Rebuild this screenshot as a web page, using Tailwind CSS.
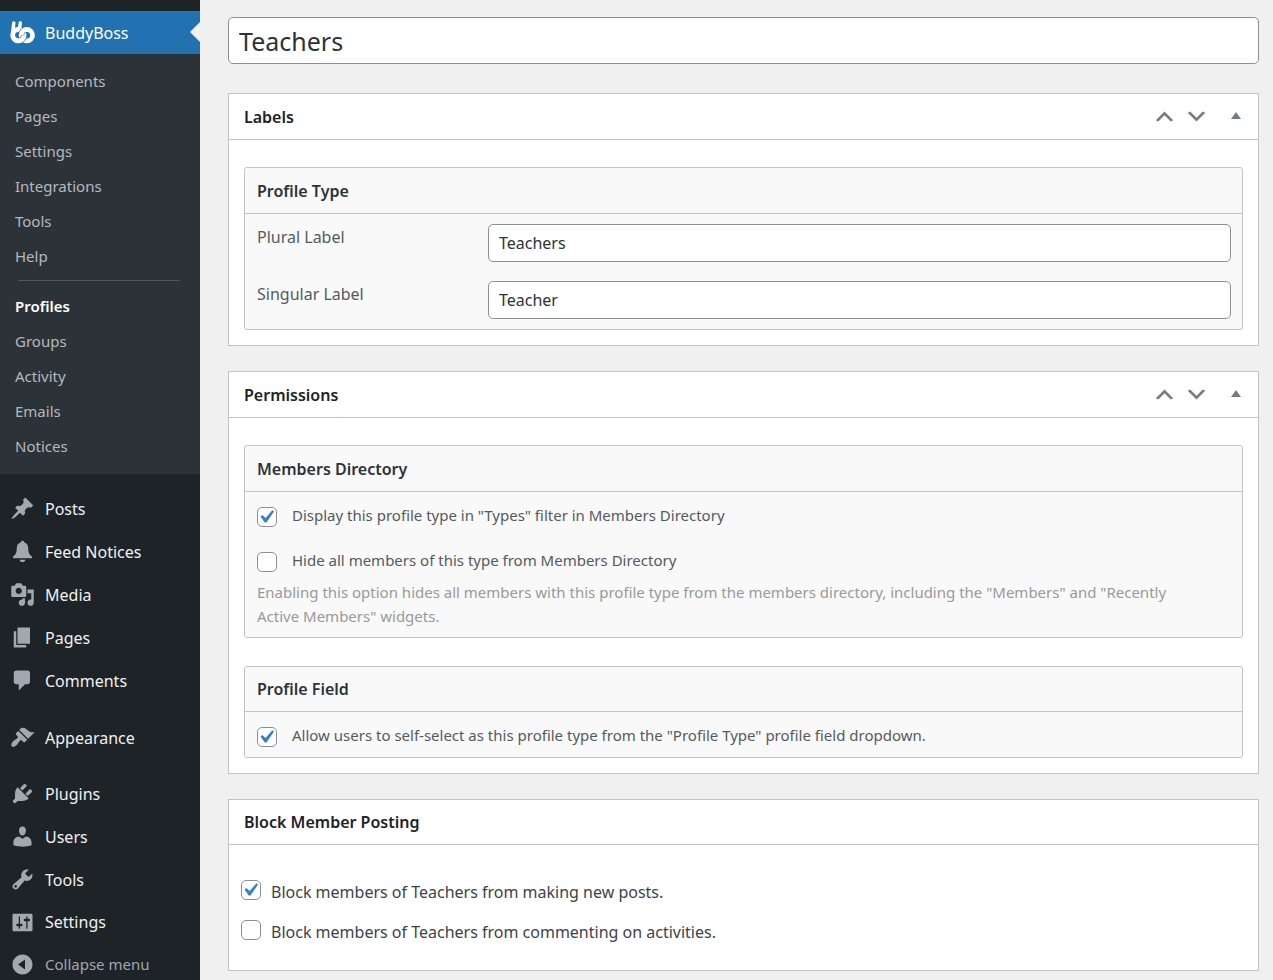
<!DOCTYPE html>
<html lang="en">
<head>
<meta charset="utf-8">
<meta name="viewport" content="width=device-width, initial-scale=1">
<title>Edit Profile Type</title>
<script src="https://cdn.jsdelivr.net/npm/@tailwindcss/browser@4"></script>
</head>
<body class="bg-[#f0f0f1] font-['Noto_Sans','Open_Sans',sans-serif] text-[#3c434a]">
<div class="flex min-h-screen">
  <nav aria-label="Admin menu" class="w-[200px] shrink-0 bg-[#1d2327] pt-[11px] text-base text-[#f0f0f1]">
    <a href="#" class="relative flex h-[43px] items-center gap-[10px] bg-[#2271b1] pl-[10px] text-white">
      <svg class="size-[25px]" viewBox="0 0 25 25" fill="none" aria-hidden="true">
        <path stroke="#fff" stroke-width="3.4" stroke-linecap="round" d="M3.800 3L2.600 13M10.300 3L9.500 8.500"/>
        <circle cx="8.400" cy="15.200" r="5.700" stroke="#fff" stroke-width="4.800"/>
        <circle cx="16.800" cy="15.200" r="5.700" stroke="#2271b1" stroke-width="6"/>
        <circle cx="16.800" cy="15.200" r="5.700" stroke="#fff" stroke-width="4.800"/>
        <path stroke="#2271b1" stroke-width="6" d="M14.100 15.200A5.700 5.700 0 0 1 8.400 20.900"/>
        <path stroke="#fff" stroke-width="4.800" d="M14.100 15.200A5.700 5.700 0 0 1 8.400 20.900A5.700 5.700 0 0 1 5 19.800"/>
      </svg>
      <span>BuddyBoss</span>
      <span class="absolute top-[11px] right-0 border-y-[10px] border-r-[10px] border-y-transparent border-r-[#f0f0f1]"></span>
    </a>
    <div class="bg-[#2c3338] py-[10px] text-[15px] text-[#b4b9be]">
      <a href="#" class="flex h-[35px] items-center px-[15px]">Components</a>
      <a href="#" class="flex h-[35px] items-center px-[15px]">Pages</a>
      <a href="#" class="flex h-[35px] items-center px-[15px]">Settings</a>
      <a href="#" class="flex h-[35px] items-center px-[15px]">Integrations</a>
      <a href="#" class="flex h-[35px] items-center px-[15px]">Tools</a>
      <a href="#" class="flex h-[35px] items-center px-[15px]">Help</a>
      <hr class="mt-[6px] mr-5 mb-2 ml-[18px] border-t border-[#50565b]">
      <a href="#" aria-current="page" class="flex h-[35px] items-center px-[15px] font-semibold text-white">Profiles</a>
      <a href="#" class="flex h-[35px] items-center px-[15px]">Groups</a>
      <a href="#" class="flex h-[35px] items-center px-[15px]">Activity</a>
      <a href="#" class="flex h-[35px] items-center px-[15px]">Emails</a>
      <a href="#" class="flex h-[35px] items-center px-[15px]">Notices</a>
    </div>
    <div class="pt-[13px]">
      <a href="#" class="flex h-[43px] items-center gap-[10px] pl-[10px]">
        <svg class="size-[25px] fill-[#a2a8ad]" viewBox="0 0 20 20" aria-hidden="true"><path d="M10.440 3.020l1.820-1.820 6.360 6.350-1.830 1.820c-1.050-.68-2.480-.57-3.410.36l-.75.75c-.92.93-1.040 2.350-.35 3.410l-1.830 1.820-2.410-2.410-2.800 2.790c-.42.42-3.380 2.710-3.800 2.290s1.860-3.390 2.280-3.810l2.790-2.790L4.100 9.360l1.830-1.820c1.050.69 2.480.57 3.400-.36l.75-.75c.93-.92 1.050-2.350.36-3.410z"/></svg>
        Posts</a>
      <a href="#" class="flex h-[43px] items-center gap-[10px] pl-[10px]">
        <svg class="size-[25px] fill-[#a2a8ad]" viewBox="0 0 20 20" aria-hidden="true"><path d="M10 1.400c.8 0 1.300.5 1.400 1.200 2.100.7 3.200 2.400 3.200 4.800 0 3.600.9 5.200 2.700 6.300.5.4.5 1.700-.1 1.700H2.800c-.6 0-.6-1.300-.1-1.700 1.800-1.100 2.700-2.700 2.700-6.300 0-2.400 1.100-4.100 3.200-4.800.1-.7.600-1.200 1.400-1.200zM7.700 16.500h4.600c-.2 1.200-1.100 1.900-2.300 1.900s-2.100-.7-2.300-1.900z"/></svg>
        Feed Notices</a>
      <a href="#" class="flex h-[43px] items-center gap-[10px] pl-[10px]">
        <svg class="size-[25px] fill-[#a2a8ad]" viewBox="0 0 20 20" aria-hidden="true"><path d="M13 11V4c0-.55-.45-1-1-1h-1.670L9 1H5L3.670 3H2c-.55 0-1 .45-1 1v7c0 .55.45 1 1 1h10c.55 0 1-.45 1-1zM7 4.500c1.380 0 2.500 1.120 2.500 2.500S8.380 9.500 7 9.500 4.500 8.380 4.500 7 5.620 4.500 7 4.500zM14 6h5v10.500c0 1.380-1.120 2.500-2.500 2.500S14 17.880 14 16.500s1.120-2.500 2.500-2.500c.17 0 .34.02.5.05V9h-3V6zm-4 8.050V13h2v3.500c0 1.380-1.120 2.500-2.500 2.500S7 17.880 7 16.500 8.120 14 9.500 14c.17 0 .34.02.5.05z"/></svg>
        Media</a>
      <a href="#" class="flex h-[43px] items-center gap-[10px] pl-[10px]">
        <svg class="size-[25px] fill-[#a2a8ad]" viewBox="0 0 20 20" aria-hidden="true"><path d="M6 15V2h10v13H6zm-1 1h8v2H3V5h2v11z"/></svg>
        Pages</a>
      <a href="#" class="flex h-[43px] items-center gap-[10px] pl-[10px]">
        <svg class="size-[25px] fill-[#a2a8ad]" viewBox="0 0 20 20" aria-hidden="true"><path d="M5 2h9c1.100 0 2 .9 2 2v7c0 1.100-.9 2-2 2h-2l-5 5v-5H5c-1.100 0-2-.9-2-2V4c0-1.100.9-2 2-2z"/></svg>
        Comments</a>
      <a href="#" class="mt-[14px] flex h-[43px] items-center gap-[10px] pl-[10px]">
        <svg class="size-[25px] fill-[#a2a8ad]" viewBox="0 0 20 20" aria-hidden="true"><path d="M14.480 11.060L7.410 3.990l1.500-1.500c.5-.56 2.300-.47 3.510.32 1.210.8 1.430 1.280 2.910 2.100 1.180.64 2.450 1.260 4.450.85zm-.71.71L6.700 4.700 4.930 6.470c-.39.39-.39 1.020 0 1.410l1.060 1.060c.39.39.39 1.030 0 1.420-.6.6-1.430 1.110-2.210 1.690-.35.26-.7.53-1.010.84C1.430 14.230.4 16.080 1.400 17.070c.99 1 2.840-.03 4.180-1.360.31-.31.58-.66.85-1.020.57-.78 1.080-1.610 1.690-2.210.39-.39 1.020-.39 1.410 0l1.060 1.060c.39.39 1.020.39 1.410 0z"/></svg>
        Appearance</a>
      <a href="#" class="mt-[13px] flex h-[43px] items-center gap-[10px] pl-[10px]">
        <svg class="size-[25px] fill-[#a2a8ad]" viewBox="0 0 20 20" aria-hidden="true"><path d="M13.110 4.360L9.870 7.600 8 5.730l3.240-3.240c.35-.34 1.050-.2 1.560.32.52.51.66 1.210.31 1.550zm-8 1.770l.91-1.120 9.010 9.010-1.190.84c-.71.71-2.630 1.160-3.820 1.160H6.140L4.900 17.260c-.59.59-1.540.59-2.120 0-.59-.58-.59-1.530 0-2.120l1.240-1.240v-3.880c0-1.130.4-3.190 1.090-3.890zm7.260 3.970l3.240-3.240c.34-.35 1.040-.21 1.550.31.52.51.66 1.210.31 1.550l-3.240 3.250z"/></svg>
        Plugins</a>
      <a href="#" class="flex h-[43px] items-center gap-[10px] pl-[10px]">
        <svg class="size-[25px] fill-[#a2a8ad]" viewBox="0 0 20 20" aria-hidden="true"><path d="M10 9.250c-2.270 0-2.730-3.440-2.730-3.440C7 4.020 7.820 2 9.970 2c2.160 0 2.980 2.020 2.710 3.810 0 0-.41 3.440-2.680 3.440zm0 2.570L12.720 10c2.390 0 4.520 2.330 4.520 4.530v2.490s-3.650 1.130-7.240 1.130c-3.650 0-7.240-1.130-7.240-1.130v-2.490c0-2.250 1.940-4.480 4.470-4.480z"/></svg>
        Users</a>
      <a href="#" class="flex h-[43px] items-center gap-[10px] pl-[10px]">
        <svg class="size-[25px] fill-[#a2a8ad]" viewBox="0 0 20 20" aria-hidden="true"><path d="M16.680 9.770c-1.340 1.340-3.300 1.670-4.950.99l-5.410 6.520c-.99.99-2.590.99-3.580 0s-.99-2.590 0-3.570l6.520-5.420c-.68-1.650-.35-3.610.99-4.950 1.280-1.280 3.120-1.620 4.720-1.060l-2.890 2.890 2.820 2.820 2.860-2.870c.53 1.580.18 3.390-1.080 4.650zM3.810 16.210c.4.39 1.040.39 1.430 0 .4-.4.4-1.040 0-1.430-.39-.4-1.030-.4-1.430 0-.39.39-.39 1.030 0 1.430z"/></svg>
        Tools</a>
      <a href="#" class="flex h-[42px] items-center gap-[10px] pl-[10px]">
        <svg class="size-[25px] fill-[#a2a8ad]" viewBox="0 0 20 20" aria-hidden="true"><path d="M18 16V4c0-.55-.45-1-1-1H3c-.55 0-1 .45-1 1v12c0 .55.45 1 1 1h14c.55 0 1-.45 1-1zM8 11h1c.55 0 1 .45 1 1s-.45 1-1 1H8v1.500c0 .28-.22.5-.5.5s-.5-.22-.5-.5V13H6c-.55 0-1-.45-1-1s.45-1 1-1h1V5.500c0-.28.22-.5.5-.5s.5.22.5.5V11zm5-2h-1c-.55 0-1-.45-1-1s.45-1 1-1h1V5.500c0-.28.22-.5.5-.5s.5.22.5.5V7h1c.55 0 1 .45 1 1s-.45 1-1 1h-1v5.500c0 .28-.22.5-.5.5s-.5-.22-.5-.5V9z"/></svg>
        Settings</a>
      <button type="button" class="flex h-[42px] w-full items-center gap-[10px] pl-[10px] text-[15px] text-[#a2a8ad]">
        <svg class="size-[25px] fill-[#a2a8ad]" viewBox="0 0 20 20" aria-hidden="true"><path d="M10 2c4.420 0 8 3.580 8 8s-3.580 8-8 8-8-3.580-8-8 3.580-8 8-8zm2 12V6l-5.500 4z"/></svg>
        Collapse menu</button>
    </div>
  </nav>

  <main class="min-w-0 flex-1 pt-[17px] pr-[14px] pl-7">
    <input type="text" aria-label="Title" value="Teachers" class="block h-[47px] w-full rounded-[5px] border border-[#8c8f94] bg-white px-[10px] text-[25px] text-[#2c3338]">

    <div class="mt-[29px] flex flex-col gap-[25px]">
      <section class="border border-[#c3c4c7] bg-white">
        <div class="flex h-[46px] items-center justify-between border-b border-[#c3c4c7] pr-[17px] pl-[15px]">
          <h2 class="text-base font-semibold text-[#1d2327]">Labels</h2>
          <div class="flex items-center gap-[7px] text-[#787c82]">
            <button type="button" aria-label="Move up"><svg class="size-[25px] fill-current" viewBox="0 0 20 20" aria-hidden="true"><path d="M15 14l-5-5-5 5-2-1 7-7 7 7z"/></svg></button>
            <button type="button" aria-label="Move down"><svg class="size-[25px] fill-current" viewBox="0 0 20 20" aria-hidden="true"><path d="M5 6l5 5 5-5 2 1-7 7-7-7z"/></svg></button>
            <button type="button" aria-label="Toggle panel" class="ml-[15px] pb-[2px]"><svg class="h-[7px] w-[10px] fill-current" viewBox="0 0 10 7" aria-hidden="true"><path d="M5 0l5 7H0z"/></svg></button>
          </div>
        </div>
        <div class="px-[15px] pt-[27px] pb-[15px]">
          <div class="rounded-[3px] border border-[#c3c4c7] bg-[#f9f9f9]">
            <h3 class="flex h-[46px] items-center border-b border-[#c3c4c7] px-3 text-base font-semibold text-[#2c3338]">Profile Type</h3>
            <div class="flex flex-col gap-[19px] py-[10px] pr-[11px] pl-3 text-base">
              <div class="flex">
                <label for="plural" class="w-[231px] shrink-0 leading-[26px] text-[#555a60]">Plural Label</label>
                <input id="plural" type="text" value="Teachers" class="h-[38px] min-w-0 flex-1 rounded-[5px] border border-[#8c8f94] bg-white px-[10px] text-[#2c3338]">
              </div>
              <div class="flex">
                <label for="singular" class="w-[231px] shrink-0 leading-[26px] text-[#555a60]">Singular Label</label>
                <input id="singular" type="text" value="Teacher" class="h-[38px] min-w-0 flex-1 rounded-[5px] border border-[#8c8f94] bg-white px-[10px] text-[#2c3338]">
              </div>
            </div>
          </div>
        </div>
      </section>

      <section class="border border-[#c3c4c7] bg-white">
        <div class="flex h-[46px] items-center justify-between border-b border-[#c3c4c7] pr-[17px] pl-[15px]">
          <h2 class="text-base font-semibold text-[#1d2327]">Permissions</h2>
          <div class="flex items-center gap-[7px] text-[#787c82]">
            <button type="button" aria-label="Move up"><svg class="size-[25px] fill-current" viewBox="0 0 20 20" aria-hidden="true"><path d="M15 14l-5-5-5 5-2-1 7-7 7 7z"/></svg></button>
            <button type="button" aria-label="Move down"><svg class="size-[25px] fill-current" viewBox="0 0 20 20" aria-hidden="true"><path d="M5 6l5 5 5-5 2 1-7 7-7-7z"/></svg></button>
            <button type="button" aria-label="Toggle panel" class="ml-[15px] pb-[2px]"><svg class="h-[7px] w-[10px] fill-current" viewBox="0 0 10 7" aria-hidden="true"><path d="M5 0l5 7H0z"/></svg></button>
          </div>
        </div>
        <div class="flex flex-col gap-7 px-[15px] pt-[27px] pb-[15px]">
          <div class="rounded-[3px] border border-[#c3c4c7] bg-[#f9f9f9]">
            <h3 class="flex h-[46px] items-center border-b border-[#c3c4c7] px-3 text-base font-semibold text-[#2c3338]">Members Directory</h3>
            <div class="px-3 pt-[11px] pb-[9px] text-[15px] leading-6 text-[#555a60]">
              <label class="flex gap-[15px]">
                <span class="mt-1 grid size-5 shrink-0">
                  <input type="checkbox" checked class="peer col-start-1 row-start-1 size-5 appearance-none rounded-[5px] border border-[#8c8f94] bg-white">
                  <svg class="pointer-events-none invisible col-start-1 row-start-1 size-[26px] -translate-x-1 -translate-y-[3px] fill-[#3582c4] peer-checked:visible" viewBox="0 0 20 20" aria-hidden="true"><path d="M14.830 4.890l1.340.94-5.810 8.380H9.020L5.780 9.670l1.340-1.250 2.570 2.400z"/></svg>
                </span>
                Display this profile type in "Types" filter in Members Directory</label>
              <label class="mt-[21px] flex gap-[15px]">
                <span class="mt-1 grid size-5 shrink-0">
                  <input type="checkbox" class="peer col-start-1 row-start-1 size-5 appearance-none rounded-[5px] border border-[#8c8f94] bg-white">
                  <svg class="pointer-events-none invisible col-start-1 row-start-1 size-[26px] -translate-x-1 -translate-y-[3px] fill-[#3582c4] peer-checked:visible" viewBox="0 0 20 20" aria-hidden="true"><path d="M14.830 4.890l1.340.94-5.810 8.380H9.020L5.780 9.670l1.340-1.250 2.570 2.400z"/></svg>
                </span>
                Hide all members of this type from Members Directory</label>
              <p class="mt-2 pr-8 text-[#999]">Enabling this option hides all members with this profile type from the members directory, including the "Members" and "Recently Active Members" widgets.</p>
            </div>
          </div>
          <div class="rounded-[3px] border border-[#c3c4c7] bg-[#f9f9f9]">
            <h3 class="flex h-[45px] items-center border-b border-[#c3c4c7] px-3 text-base font-semibold text-[#2c3338]">Profile Field</h3>
            <div class="px-3 pt-[11px] pb-[10px] text-[15px] leading-6 text-[#555a60]">
              <label class="flex gap-[15px]">
                <span class="mt-1 grid size-5 shrink-0">
                  <input type="checkbox" checked class="peer col-start-1 row-start-1 size-5 appearance-none rounded-[5px] border border-[#8c8f94] bg-white">
                  <svg class="pointer-events-none invisible col-start-1 row-start-1 size-[26px] -translate-x-1 -translate-y-[3px] fill-[#3582c4] peer-checked:visible" viewBox="0 0 20 20" aria-hidden="true"><path d="M14.830 4.890l1.340.94-5.810 8.380H9.020L5.780 9.670l1.340-1.250 2.570 2.400z"/></svg>
                </span>
                Allow users to self-select as this profile type from the "Profile Type" profile field dropdown.</label>
            </div>
          </div>
        </div>
      </section>

      <section class="border border-[#c3c4c7] bg-white">
        <div class="flex h-[45px] items-center border-b border-[#c3c4c7] px-[15px]">
          <h2 class="text-base font-semibold text-[#1d2327]">Block Member Posting</h2>
        </div>
        <div class="flex flex-col gap-[14px] px-3 pt-[34px] pb-[25px] text-base leading-[26px]">
          <label class="flex gap-[10px]">
            <span class="mt-px grid size-5 shrink-0">
              <input type="checkbox" checked class="peer col-start-1 row-start-1 size-5 appearance-none rounded-[5px] border border-[#8c8f94] bg-white">
              <svg class="pointer-events-none invisible col-start-1 row-start-1 size-[26px] -translate-x-1 -translate-y-[3px] fill-[#3582c4] peer-checked:visible" viewBox="0 0 20 20" aria-hidden="true"><path d="M14.830 4.890l1.340.94-5.810 8.380H9.020L5.780 9.670l1.340-1.250 2.570 2.400z"/></svg>
            </span>
            Block members of Teachers from making new posts.</label>
          <label class="flex gap-[10px]">
            <span class="mt-px grid size-5 shrink-0">
              <input type="checkbox" class="peer col-start-1 row-start-1 size-5 appearance-none rounded-[5px] border border-[#8c8f94] bg-white">
              <svg class="pointer-events-none invisible col-start-1 row-start-1 size-[26px] -translate-x-1 -translate-y-[3px] fill-[#3582c4] peer-checked:visible" viewBox="0 0 20 20" aria-hidden="true"><path d="M14.830 4.890l1.340.94-5.810 8.380H9.020L5.780 9.670l1.340-1.250 2.570 2.400z"/></svg>
            </span>
            Block members of Teachers from commenting on activities.</label>
        </div>
      </section>
    </div>
  </main>
</div>
</body>
</html>
